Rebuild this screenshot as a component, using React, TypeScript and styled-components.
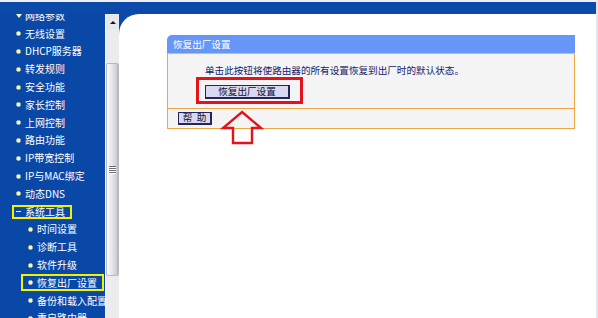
import React from "react";
import styled, { createGlobalStyle } from "styled-components";

const Global = createGlobalStyle`
  html, body { margin: 0; padding: 0; background: #fff; }
  body {
    width: 598px; height: 318px; overflow: hidden;
    font-family: "Noto Sans CJK SC", "Noto Sans", sans-serif;
  }
`;

const Frame = styled.div`
  width: 598px; height: 318px; box-sizing: border-box;
  display: flex; flex-direction: column;
  border-top: 2px solid #eef0f3; border-right: 2px solid #e1e6ec;
  background: #0a49a8; overflow: hidden;
`;
const TopBand = styled.div`
  height: 12px; flex: none; background: #0b4aa9;
`;
const Main = styled.div`
  flex: 1; display: flex; min-height: 0;
`;
const Sidebar = styled.nav`
  width: 105px; flex: none; background: #0a48a7; overflow: hidden;
`;
const Menu = styled.ul`
  list-style: none; margin: -7px 0 0; padding: 0;
`;
const Row = styled.li<{ $level: number }>`
  height: 17.8px; display: flex; align-items: center;
  padding-left: ${(p) => (p.$level ? 21 : 12)}px;
`;
const Label = styled.span<{ $level: number; $hl?: boolean }>`
  display: inline-flex; align-items: center; gap: 4px;
  height: ${(p) => (p.$level ? 17 : 14)}px; box-sizing: border-box;
  border: 2px solid ${(p) => (p.$hl ? "#f2f200" : "transparent")};
  padding: 0 5px 0 ${(p) => (p.$level ? 5 : 2)}px;
  color: #fff; font-size: 10px; line-height: 10px; white-space: nowrap;
`;
const BulletBox = styled.span`
  width: 5px; height: 5px; flex: none;
  display: inline-flex; align-items: center; justify-content: center;
`;
const Dot = styled.span`
  width: 3px; height: 3px; background: #fff7a8;
  box-shadow: 1px 0 0 rgba(255, 247, 168, 0.55), -1px 0 0 rgba(255, 247, 168, 0.55),
    0 1px 0 rgba(255, 247, 168, 0.55), 0 -1px 0 rgba(255, 247, 168, 0.55);
`;
const Down = styled.span`
  width: 0; height: 0;
  border-left: 3px solid transparent; border-right: 3px solid transparent;
  border-top: 4px solid #fff8c0;
`;
const Minus = styled.span`
  width: 5px; height: 1.5px; background: #fffbe0;
`;

const Scrollbar = styled.div`
  width: 14px; flex: none; box-sizing: border-box;
  display: flex; flex-direction: column;
  background: #ececef; border-left: 1px solid #f8f8f8;
`;
const ScrollBtn = styled.div`
  height: 16px; flex: none; display: flex; align-items: center; justify-content: center;
  background: #e8e8eb;
`;
const UpTri = styled.span`
  width: 0; height: 0;
  border-left: 3px solid transparent; border-right: 3px solid transparent;
  border-bottom: 3px solid #111;
`;
const Track = styled.div<{ $h: number }>`
  height: ${(p) => p.$h}px; flex: none;
`;
const Thumb = styled.div`
  height: 213px; flex: none; box-sizing: border-box;
  background: linear-gradient(90deg, #fbfbfc 0%, #e6e6ea 45%, #cfcfd5 85%, #b4b4bc 100%);
  border: 1px solid #b8b8c2; border-radius: 2px;
  display: flex; flex-direction: column; align-items: center; justify-content: center; gap: 1px;
`;
const Grip = styled.span`
  width: 7px; height: 1px; background: #6e6e78; box-shadow: 0 1px 0 #fff;
`;

const Content = styled.main`
  flex: 1; position: relative; background: #fff;
  border-top-left-radius: 20px;
  padding: 21px 21px 0 48px;
`;
const Panel = styled.section`
  width: 408px;
`;
const PanelHead = styled.div`
  height: 18px; display: flex; align-items: center; padding-left: 6px;
  background: #6596f8; border-top-left-radius: 5px;
  border-bottom: 1px solid #a4c0f6;
  color: #fff; font-size: 9.6px;
`;
const PanelBody = styled.div`
  background: #f4f4f4;
  border: 1px solid #f0a445; border-top: none;
  padding: 10px 0 4px 28px;
  display: flex; flex-direction: column; align-items: flex-start; gap: 1px;
`;
const Desc = styled.p`
  margin: 0 0 0 9px; height: 12px; line-height: 12px;
  font-size: 9.6px; color: #14206a; white-space: nowrap;
`;
const RedFrame = styled.div`
  display: inline-flex; box-sizing: border-box; height: 27px;
  border: 3px solid #e3121b;
  padding: 5px 10px 2px 6px;
`;
const Btn = styled.button<{ $w: number; $h: number }>`
  width: ${(p) => p.$w}px; height: ${(p) => p.$h}px; box-sizing: border-box;
  padding: 0; margin: 0;
  background: #d8d8f0; color: #0e0e30;
  border: 1px solid #25255e; border-right-width: 2px; border-bottom-width: 2px;
  font-family: inherit; font-size: 9.6px; line-height: 1;
  display: flex; align-items: center; justify-content: center;
`;
const HelpRow = styled.div`
  height: 20px; box-sizing: border-box;
  background: #f4f4f4;
  border: 1px solid #f0a445; border-top: none;
  padding: 3px 0 0 10px;
`;
const Arrow = styled.svg`
  position: absolute; left: 102px; top: 96px;
  width: 42px; height: 36px; overflow: visible;
`;

type Item = { text: string; level: number; bullet: "dot" | "down" | "minus"; hl?: boolean };

const items: Item[] = [
  { text: "网络参数", level: 0, bullet: "down" },
  { text: "无线设置", level: 0, bullet: "dot" },
  { text: "DHCP服务器", level: 0, bullet: "dot" },
  { text: "转发规则", level: 0, bullet: "dot" },
  { text: "安全功能", level: 0, bullet: "dot" },
  { text: "家长控制", level: 0, bullet: "dot" },
  { text: "上网控制", level: 0, bullet: "dot" },
  { text: "路由功能", level: 0, bullet: "dot" },
  { text: "IP带宽控制", level: 0, bullet: "dot" },
  { text: "IP与MAC绑定", level: 0, bullet: "dot" },
  { text: "动态DNS", level: 0, bullet: "dot" },
  { text: "系统工具", level: 0, bullet: "minus", hl: true },
  { text: "时间设置", level: 1, bullet: "dot" },
  { text: "诊断工具", level: 1, bullet: "dot" },
  { text: "软件升级", level: 1, bullet: "dot" },
  { text: "恢复出厂设置", level: 1, bullet: "dot", hl: true },
  { text: "备份和载入配置", level: 1, bullet: "dot" },
  { text: "重启路由器", level: 1, bullet: "dot" },
];

function Bullet({ kind }: { kind: Item["bullet"] }) {
  return (
    <BulletBox>
      {kind === "dot" ? <Dot /> : kind === "down" ? <Down /> : <Minus />}
    </BulletBox>
  );
}

export default function App() {
  return (
    <>
      <Global />
      <Frame>
        <TopBand />
        <Main>
          <Sidebar>
            <Menu>
              {items.map((it) => (
                <Row key={it.text} $level={it.level}>
                  <Label $level={it.level} $hl={it.hl}>
                    <Bullet kind={it.bullet} />
                    {it.text}
                  </Label>
                </Row>
              ))}
            </Menu>
          </Sidebar>
          <Scrollbar>
            <ScrollBtn>
              <UpTri />
            </ScrollBtn>
            <Track $h={33} />
            <Thumb>
              <Grip />
              <Grip />
              <Grip />
              <Grip />
            </Thumb>
          </Scrollbar>
          <Content>
            <Panel>
              <PanelHead>恢复出厂设置</PanelHead>
              <PanelBody>
                <Desc>单击此按钮将使路由器的所有设置恢复到出厂时的默认状态。</Desc>
                <RedFrame>
                  <Btn $w={85} $h={14}>恢复出厂设置</Btn>
                </RedFrame>
              </PanelBody>
              <HelpRow>
                <Btn $w={34} $h={13}>帮&nbsp;&nbsp;助</Btn>
              </HelpRow>
            </Panel>
            <Arrow viewBox="0 0 42 36">
              <polygon
                points="21,2 40,18 31,18 31,33 12,33 12,18 2,18"
                fill="none"
                stroke="#e3121b"
                strokeWidth="2.4"
                strokeLinejoin="miter"
              />
            </Arrow>
          </Content>
        </Main>
      </Frame>
    </>
  );
}
